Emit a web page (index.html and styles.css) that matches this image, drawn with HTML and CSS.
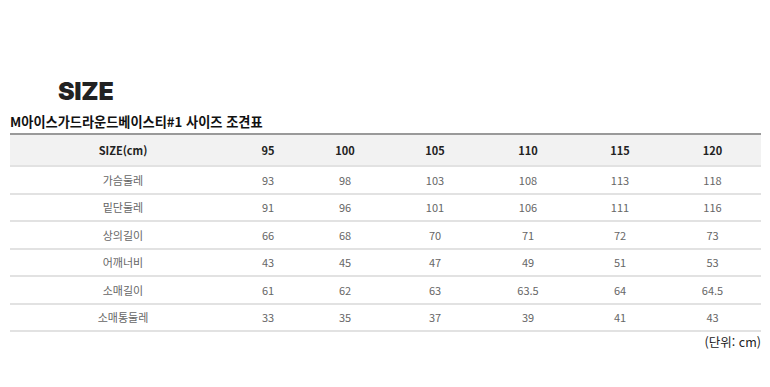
FILE: index.html
```html
<!DOCTYPE html>
<html lang="ko">
<head>
  <meta charset="UTF-8" />
  <title>SIZE</title>
  <link rel="stylesheet" href="styles.css">
</head>
<body>
  <div class="size-wrap">
    <h2 class="size-title">SIZE</h2>
    <h3 class="size-name">M아이스가드라운드베이스티#1 사이즈 조견표</h3>
    <table class="size-table">
      <colgroup>
        <col class="c-label">
        <col class="c-95">
        <col class="c-100">
        <col class="c-105">
        <col class="c-110">
        <col class="c-115">
        <col class="c-120">
      </colgroup>
      <thead>
        <tr>
          <th>SIZE(cm)</th>
          <th>95</th>
          <th>100</th>
          <th>105</th>
          <th>110</th>
          <th>115</th>
          <th>120</th>
        </tr>
      </thead>
      <tbody>
        <tr><td>가슴둘레</td><td>93</td><td>98</td><td>103</td><td>108</td><td>113</td><td>118</td></tr>
        <tr><td>밑단둘레</td><td>91</td><td>96</td><td>101</td><td>106</td><td>111</td><td>116</td></tr>
        <tr><td>상의길이</td><td>66</td><td>68</td><td>70</td><td>71</td><td>72</td><td>73</td></tr>
        <tr><td>어깨너비</td><td>43</td><td>45</td><td>47</td><td>49</td><td>51</td><td>53</td></tr>
        <tr><td>소매길이</td><td>61</td><td>62</td><td>63</td><td>63.5</td><td>64</td><td>64.5</td></tr>
        <tr><td>소매통둘레</td><td>33</td><td>35</td><td>37</td><td>39</td><td>41</td><td>43</td></tr>
      </tbody>
    </table>
    <p class="size-unit">(단위: cm)</p>
  </div>
</body>
</html>
```

FILE: styles.css
```css
body {
  margin: 0;
  padding: 0;
  background: #fff;
  font-family: "Noto Sans CJK KR", "Noto Sans", sans-serif;
}
.size-wrap {
  width: 751px;
  padding: 78px 0 0 10px;
}
.size-title {
  margin: 0 0 0 48px;
  font-family: Inter, "Noto Sans", sans-serif;
  font-weight: 900;
  font-size: 25px;
  line-height: 26px;
  letter-spacing: -0.3px;
  color: #222;
}
.size-name {
  margin: 10px 0 4px;
  font-size: 13.2px;
  line-height: 15px;
  font-weight: 700;
  color: #111;
}
.size-table {
  width: 751px;
  border-collapse: collapse;
  table-layout: fixed;
  border-top: 2px solid #9a9a9a;
}
.c-label { width: 226px; }
.c-95 { width: 64px; }
.c-100 { width: 90px; }
.c-105 { width: 90px; }
.c-110 { width: 96px; }
.c-115 { width: 88px; }
.c-120 { width: 97px; }
.size-table th {
  height: 30px;
  padding: 0;
  background: #f2f2f2;
  border-bottom: 2px solid #e2e2e2;
  font-size: 11px;
  font-weight: 700;
  color: #222;
  text-align: center;
}
.size-table td {
  height: 25.5px;
  padding: 0;
  border-bottom: 2px solid #e2e2e2;
  font-size: 11px;
  color: #666;
  text-align: center;
}
.size-unit {
  margin: 2px 0 0;
  text-align: right;
  font-size: 12.5px;
  line-height: 16px;
  color: #222;
}
```
